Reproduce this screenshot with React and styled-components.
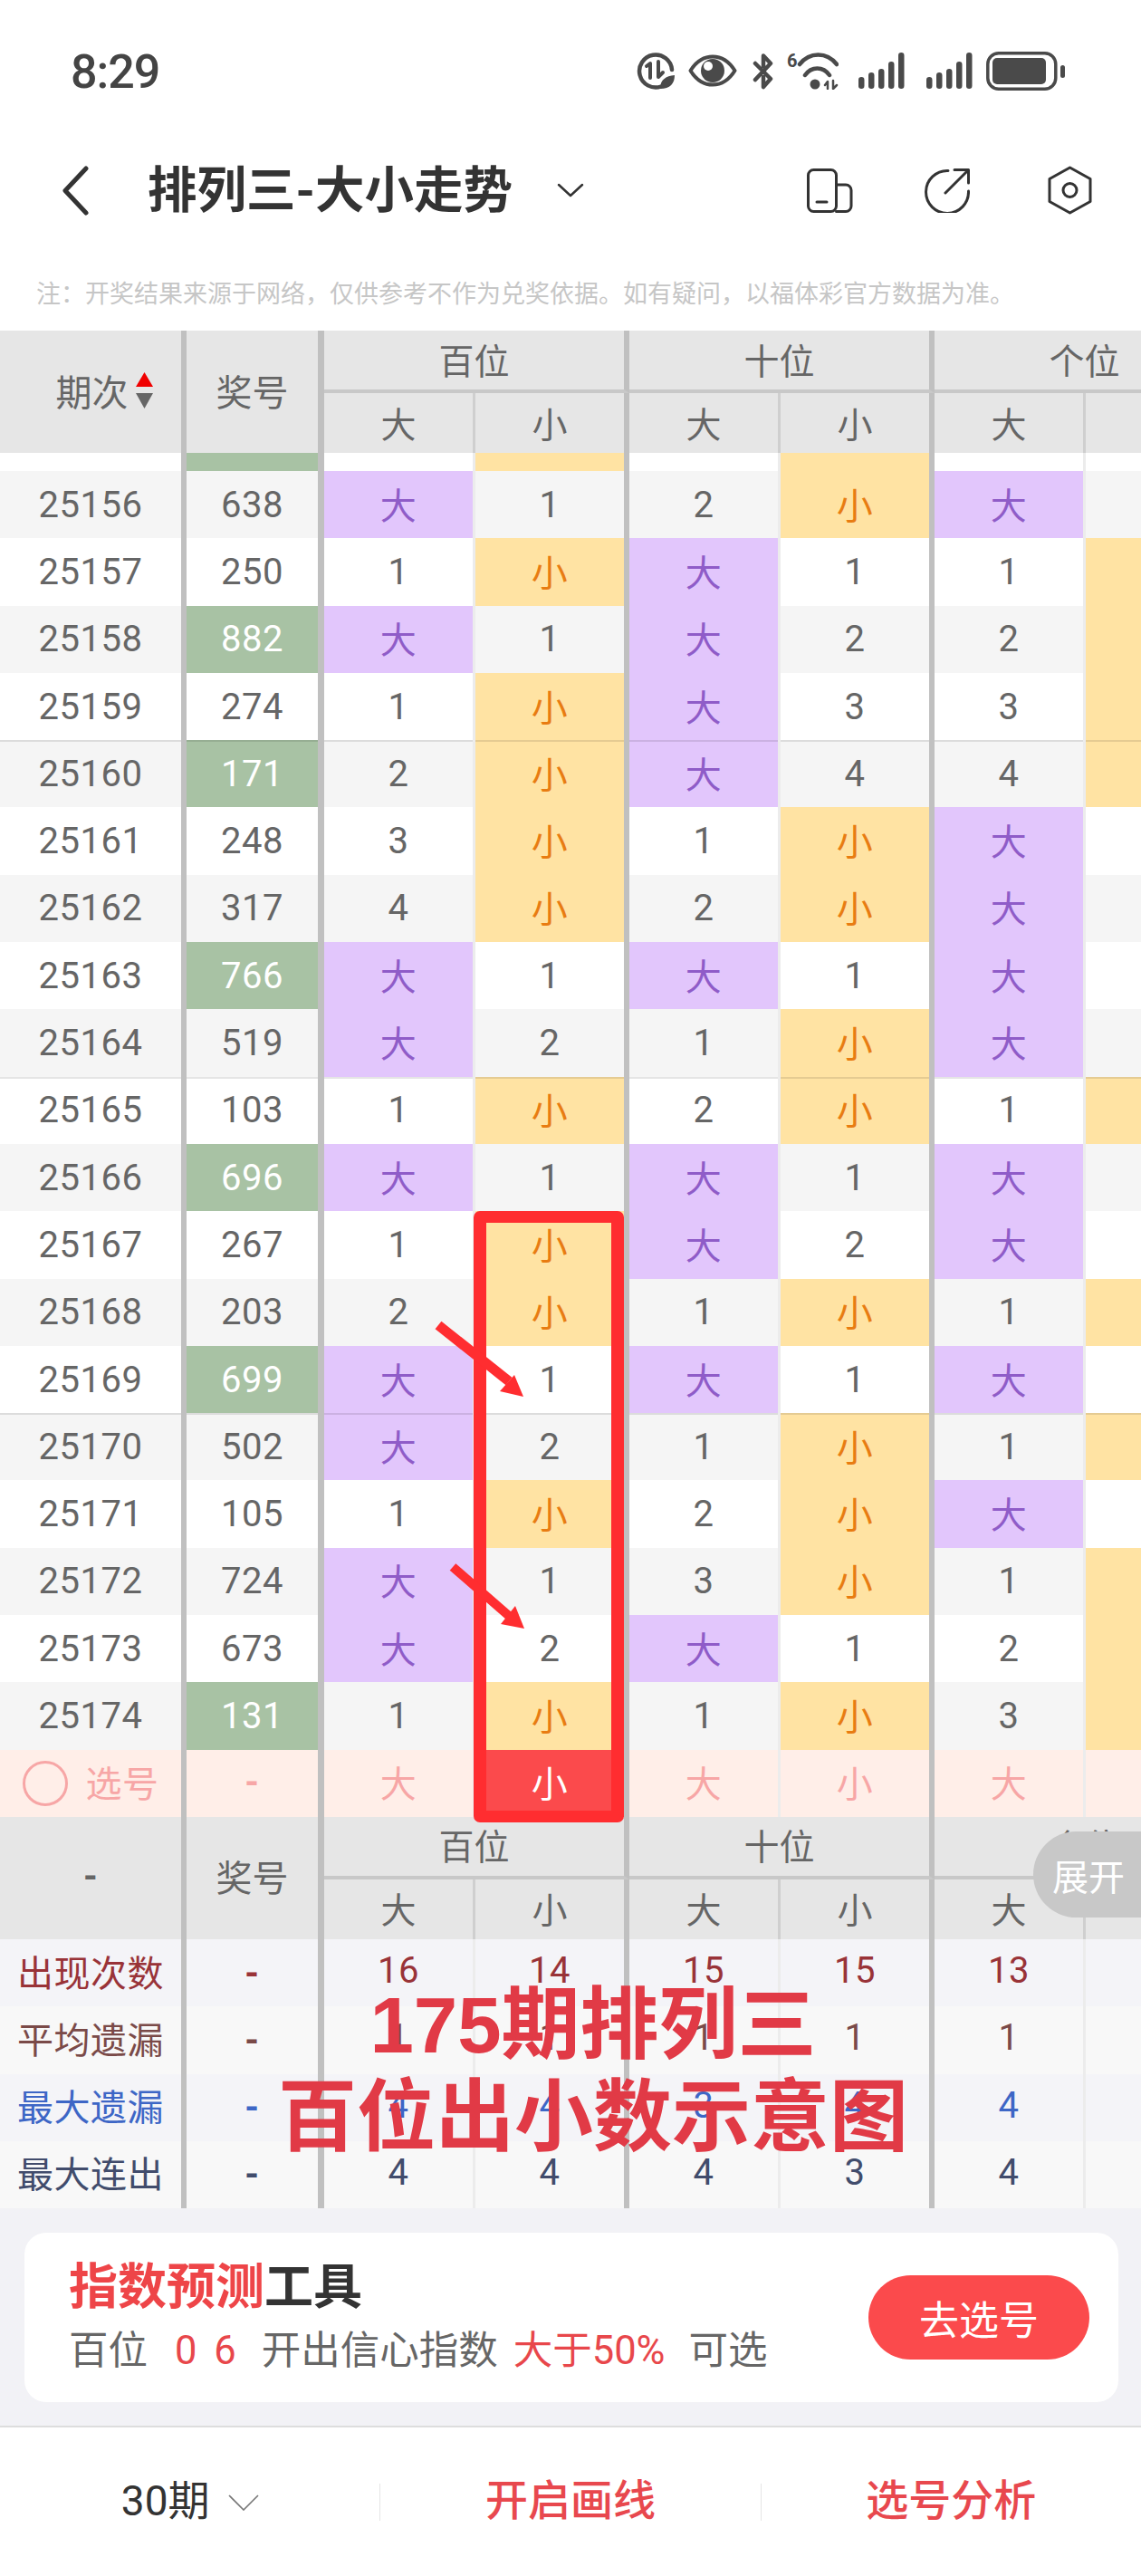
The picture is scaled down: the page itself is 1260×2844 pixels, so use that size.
import React from 'react';
import styled, { createGlobalStyle } from 'styled-components';

const GlobalStyle = createGlobalStyle`
  html, body {
    margin: 0;
    padding: 0;
    background: #fff;
  }
  * {
    box-sizing: border-box;
  }
`;

const Page = styled.div`
  position: relative;
  width: 1260px;
  height: 2844px;
  overflow: hidden;
  background: #fff;
  font-family: Roboto, 'Noto Sans CJK SC', sans-serif;
  color: #666;
`;

/* status bar */
const StatusBar = styled.div`
  display: flex;
  align-items: center;
  height: 156px;
  padding: 0 84px 0 78px;
`;

const Time = styled.div`
  padding-top: 2px;
  font-size: 52px;
  font-weight: 500;
  color: #444;
  letter-spacing: -1px;
`;

const StatusIcons = styled.div`
  display: flex;
  align-items: center;
  margin-left: auto;
`;

const StatusSlot = styled.span`
  display: flex;
  margin-left: ${p => p.$ml || 0}px;
`;

/* nav */
const NavBar = styled.div`
  display: flex;
  align-items: center;
  height: 108px;
  padding: 0 54px 0 68px;
`;

const Title = styled.h1`
  margin: 0 49px 0 65px;
  font-size: 54.5px;
  font-weight: 700;
  line-height: 70px;
  color: #333;
  white-space: nowrap;
`;

const NavIcon = styled.svg`
  display: block;
  margin-left: ${p => p.$ml || 0}px;
  fill: none;
  stroke: #333;
  stroke-width: 3;
  stroke-linecap: round;
  stroke-linejoin: round;
`;

const NavRight = styled.div`
  display: flex;
  align-items: center;
  margin-left: auto;
`;

const Note = styled.div`
  height: 101px;
  padding: 42px 0 0 40px;
  font-size: 27px;
  line-height: 38px;
  color: #c6c6c6;
  white-space: nowrap;
`;

/* table */
const COLUMNS = '206px 152px repeat(3, 167px 170px)';
const ROW_H = 74.3;

const HeadGrid = styled.div`
  display: grid;
  grid-template-columns: ${COLUMNS};
  grid-template-rows: 69px 66px;
  width: 1369px;
  background: #e6e6e6;
`;

const HeadSide = styled.div`
  grid-row: 1 / 3;
  display: flex;
  align-items: center;
  justify-content: center;
  gap: 8px;
  padding: 0 0 4px ${p => p.$indent || 0}px;
  font-size: 40px;
  border-right: ${p => p.$edge}px solid #c0c0c0;
`;

const GroupHead = styled.div`
  grid-column: span 2;
  display: flex;
  align-items: center;
  justify-content: center;
  padding-bottom: 4px;
  font-size: 39px;
  border-bottom: 4px solid #c8c8c8;
  border-right: 6px solid #c0c0c0;
`;

const SubHead = styled.div`
  display: flex;
  align-items: center;
  justify-content: center;
  padding-bottom: 3px;
  font-size: 39px;
  border-right: ${p => (p.$thick ? '6px solid #c0c0c0' : '3px solid #cfcfcf')};
`;

const Row = styled.div`
  display: grid;
  grid-template-columns: ${COLUMNS};
  width: 1369px;
  height: ${p => p.$height || ROW_H}px;
`;

const kinds = {
  plain: 'color: #666;',
  green: 'background: #a8c2a4; color: #fff;',
  big: 'background: #e2c6fc; color: #8f5cc8; padding-bottom: 3px;',
  small: 'background: #ffe3a3; color: #e87c12; padding-bottom: 3px;',
  faint: 'background: #ffeee8; color: #f7a6a6; padding-bottom: 3px;',
  pick: 'background: #fb4a4c; color: #fff; padding-bottom: 3px;',
};

const edges = {
  side: '6px solid #c0c0c0',
  wide: '7px solid #c0c0c0',
  thick: '6px solid #c0c0c0',
  thin: '3px solid #ececec',
};

const Cell = styled.div`
  display: flex;
  align-items: center;
  justify-content: center;
  font-size: 40px;
  letter-spacing: 0.5px;
  white-space: nowrap;
  background: ${p => p.$bg};
  color: ${p => p.$color || '#666'};
  border-right: ${p => edges[p.$edge]};
  box-shadow: ${p => (p.$line ? 'inset 0 2px 0 rgba(0, 0, 0, 0.1)' : 'none')};
  padding-bottom: ${p => (p.$lift ? 5 : 0)}px;
  ${p => kinds[p.$kind]}
`;

const Dash = styled.span`
  font-weight: 700;
`;

const SelectCircle = styled.span`
  width: 50px;
  height: 50px;
  margin: 3px 20px 0 0;
  border: 3px solid #f7a6a6;
  border-radius: 50%;
`;

const ExpandTab = styled.div`
  position: absolute;
  right: 0;
  top: 2022px;
  display: flex;
  align-items: center;
  justify-content: flex-end;
  width: 119px;
  height: 95px;
  padding-right: 18px;
  border-radius: 48px 0 0 48px;
  background: #c8c8c8;
  color: #fff;
  font-size: 40px;
`;

/* card + bottom */
const ToolSection = styled.div`
  height: 242px;
  padding: 27px 25px 0 27px;
  background: #f2f2f6;
  border-bottom: 2px solid #ddd;
`;

const ToolCard = styled.div`
  display: flex;
  align-items: center;
  justify-content: space-between;
  height: 187px;
  padding: 0 32px 0 49px;
  border-radius: 24px;
  background: #fff;
`;

const ToolTitle = styled.div`
  font-size: 54px;
  font-weight: 700;
  line-height: 60px;
  color: #333;
  white-space: nowrap;
  em {
    font-style: normal;
    color: #ee4548;
  }
`;

const ToolText = styled.div`
  display: flex;
  margin-top: 15px;
  font-size: 43.5px;
  line-height: 50px;
  color: #666;
  white-space: nowrap;
`;

const ToolPart = styled.span`
  margin-left: ${p => p.$ml || 0}px;
  color: ${p => (p.$red ? '#e8474b' : '#666')};
  word-spacing: ${p => p.$spread || 0}px;
`;

const PickButton = styled.div`
  display: flex;
  align-items: center;
  justify-content: center;
  width: 244px;
  height: 93px;
  border-radius: 47px;
  background: #fb4a4c;
  color: #fff;
  font-size: 44px;
`;

const BottomBar = styled.div`
  display: flex;
  align-items: center;
  height: 165px;
`;

const BottomItem = styled.div`
  flex: 1;
  display: flex;
  align-items: center;
  justify-content: center;
  gap: 20px;
  padding-bottom: 12px;
  font-size: ${p => (p.$red ? 47 : 46)}px;
  font-weight: ${p => (p.$red ? 500 : 400)};
  color: ${p => (p.$red ? '#e8484e' : '#333')};
`;

const BottomChevron = styled.svg`
  margin-top: 12px;
  fill: none;
  stroke: #777;
  stroke-width: 1.6;
`;

const BottomDivider = styled.span`
  width: 1px;
  height: 41px;
  background: #e5e5e5;
`;

/* hand drawn marks over the screenshot */
const RedFrame = styled.div`
  position: absolute;
  left: 523px;
  top: 1337px;
  width: 166px;
  height: 675px;
  border: 13px solid #ff2d30;
  border-left-width: 14px;
  border-right-width: 14px;
  border-radius: 7px;
`;

const Arrow = styled.svg`
  position: absolute;
  left: ${p => p.$left}px;
  top: ${p => p.$top}px;
`;

const BigCaption = styled.div`
  position: absolute;
  left: 0;
  top: 2185px;
  width: 1310px;
  text-align: center;
  font-family: 'Liberation Sans', 'Noto Sans CJK SC', sans-serif;
  font-size: 87px;
  font-weight: 700;
  line-height: 102px;
  color: #e13a46;
  white-space: nowrap;
`;

const rows = [
  ['25156', '638', 0, '大', '1', '2', '小', '大', '1'],
  ['25157', '250', 0, '1', '小', '大', '1', '1', '小'],
  ['25158', '882', 1, '大', '1', '大', '2', '2', '小'],
  ['25159', '274', 0, '1', '小', '大', '3', '3', '小'],
  ['25160', '171', 1, '2', '小', '大', '4', '4', '小'],
  ['25161', '248', 0, '3', '小', '1', '小', '大', '1'],
  ['25162', '317', 0, '4', '小', '2', '小', '大', '2'],
  ['25163', '766', 1, '大', '1', '大', '1', '大', '3'],
  ['25164', '519', 0, '大', '2', '1', '小', '大', '4'],
  ['25165', '103', 0, '1', '小', '2', '小', '1', '小'],
  ['25166', '696', 1, '大', '1', '大', '1', '大', '1'],
  ['25167', '267', 0, '1', '小', '大', '2', '大', '2'],
  ['25168', '203', 0, '2', '小', '1', '小', '1', '小'],
  ['25169', '699', 1, '大', '1', '大', '1', '大', '1'],
  ['25170', '502', 0, '大', '2', '1', '小', '1', '小'],
  ['25171', '105', 0, '1', '小', '2', '小', '大', '1'],
  ['25172', '724', 0, '大', '1', '3', '小', '1', '小'],
  ['25173', '673', 0, '大', '2', '大', '1', '2', '小'],
  ['25174', '131', 1, '1', '小', '1', '小', '3', '小'],
];

const stats = [
  { label: '出现次数', color: '#993338', bg: '#f4f4f8', values: ['16', '14', '15', '15', '13', '17'] },
  { label: '平均遗漏', color: '#7a4a48', bg: '#f8f8f8', values: ['1', '1', '1', '1', '1', '1'] },
  { label: '最大遗漏', color: '#3d66c6', bg: '#f4f4f8', values: ['4', '4', '3', '4', '4', '4'] },
  { label: '最大连出', color: '#414c6c', bg: '#f8f8f8', values: ['4', '4', '4', '3', '4', '4'] },
];

const cellEdge = i => (i % 2 === 0 ? 'thin' : 'thick');

const cellKind = v => {
  if (v === '大') return 'big';
  if (v === '小') return 'small';
  return 'plain';
};

const TableHead = ({ first, indent }) => (
  <HeadGrid>
    <HeadSide $edge={6} $indent={indent}>{first}</HeadSide>
    <HeadSide $edge={7}>奖号</HeadSide>
    {['百位', '十位', '个位'].map(name => (
      <GroupHead key={name}>{name}</GroupHead>
    ))}
    {[0, 1, 2, 3, 4, 5].map(i => (
      <SubHead key={i} $thick={i % 2 === 1}>
        {i % 2 === 0 ? '大' : '小'}
      </SubHead>
    ))}
  </HeadGrid>
);

const StatusStroke = { fill: 'none', stroke: '#4a4a4a', strokeLinecap: 'round', strokeLinejoin: 'round' };

const SaverIcon = () => (
  <svg width="42" height="41" viewBox="0 0 42 41">
    <path d="M27 37.5 A18 18 0 1 1 39 19" strokeWidth="4.5" {...StatusStroke} />
    <path d="M11 15 L15 12 V28 M24 10 V27 L29 22" strokeWidth="4" {...StatusStroke} />
    <path d="M26 40 C26 30 32 26 42 25 C42 34 37 40 26 40 Z" fill="#4a4a4a" />
  </svg>
);

const EyeIcon = () => (
  <svg width="54" height="36" viewBox="0 0 54 36">
    <path d="M2.5 18 C10 6 19 2.5 27 2.5 C35 2.5 44 6 51.5 18 C44 30 35 33.5 27 33.5 C19 33.5 10 30 2.5 18 Z" strokeWidth="4" {...StatusStroke} />
    <circle cx="27" cy="18" r="13" fill="#4a4a4a" />
    <circle cx="22" cy="13" r="5" fill="#fff" />
  </svg>
);

const BluetoothIcon = () => (
  <svg width="25" height="41" viewBox="0 0 25 41">
    <path d="M4 12 L21 29 L13 38 V27 M13 15 V3.5 L21 12 L4 30" strokeWidth="4.5" {...StatusStroke} />
  </svg>
);

const WifiIcon = () => (
  <svg width="57" height="42" viewBox="0 0 57 42">
    <text x="0" y="17" fontFamily="Roboto, sans-serif" fontWeight="700" fontSize="20" fill="#4a4a4a">6</text>
    <path d="M14 14 C25 0 44 0 55 14 M20 26 C27 16 40 16 47 26" strokeWidth="4.5" {...StatusStroke} />
    <circle cx="31" cy="36" r="5.5" fill="#4a4a4a" />
    <path d="M42 37 L45 33 V41 M51 32 V41 L55 37" strokeWidth="2.5" {...StatusStroke} />
  </svg>
);

const SignalIcon = () => (
  <svg width="52" height="40" viewBox="0 0 52 40">
    {[13, 18, 22, 30, 40].map((h, i) => (
      <rect key={i} x={1 + i * 11} y={40 - h} width="6.5" height={h} rx="3.2" fill="#4a4a4a" />
    ))}
  </svg>
);

const BatteryIcon = () => (
  <svg width="87" height="43" viewBox="0 0 87 43">
    <rect x="1.8" y="1.8" width="75" height="39.4" rx="12" fill="none" stroke="#4a4a4a" strokeWidth="3.5" />
    <rect x="7" y="7" width="59" height="29" rx="5" fill="#4a4a4a" />
    <rect x="82" y="15" width="5" height="14" rx="2.5" fill="#4a4a4a" />
  </svg>
);

const App = () => (
  <Page>
    <GlobalStyle />

    <StatusBar>
      <Time>8:29</Time>
      <StatusIcons>
        <StatusSlot><SaverIcon /></StatusSlot>
        <StatusSlot $ml={15}><EyeIcon /></StatusSlot>
        <StatusSlot $ml={16}><BluetoothIcon /></StatusSlot>
        <StatusSlot $ml={14}><WifiIcon /></StatusSlot>
        <StatusSlot $ml={21}><SignalIcon /></StatusSlot>
        <StatusSlot $ml={23}><SignalIcon /></StatusSlot>
        <StatusSlot $ml={15}><BatteryIcon /></StatusSlot>
      </StatusIcons>
    </StatusBar>

    <NavBar>
      <NavIcon width="30" height="55" viewBox="0 0 30 55" style={{ strokeWidth: 5 }}>
        <polyline points="27,3 4,27.5 27,52" />
      </NavIcon>
      <Title>排列三-大小走势</Title>
      <NavIcon width="30" height="16" viewBox="0 0 30 16" style={{ strokeWidth: 2.5 }}>
        <polyline points="2,2 15,14 28,2" />
      </NavIcon>
      <NavRight>
        <NavIcon width="51" height="49" viewBox="0 0 51 49">
          <rect x="1.5" y="1.5" width="31" height="46" rx="6" />
          <path d="M32.5 18 H43 A6 6 0 0 1 49 24 V41.5 A6 6 0 0 1 43 47.5 H32.5" />
          <line x1="11" y1="37" x2="22" y2="37" />
        </NavIcon>
        <NavIcon $ml={78} width="51" height="50" viewBox="0 0 51 50">
          <path d="M27 3.5 A23.5 23.5 0 1 0 49.5 26" />
          <path d="M24 28 L49 3 M34 2.5 H49.5 V17" />
        </NavIcon>
        <NavIcon $ml={86} width="49" height="54" viewBox="0 0 49 54">
          <polygon points="24.5,2 47,14.5 47,39.5 24.5,52 2,39.5 2,14.5" />
          <circle cx="24.5" cy="27" r="7.5" />
        </NavIcon>
      </NavRight>
    </NavBar>

    <Note>注：开奖结果来源于网络，仅供参考不作为兑奖依据。如有疑问，以福体彩官方数据为准。</Note>

    <TableHead
      indent={30}
      first={
        <>
          期次
          <svg width="19" height="40" viewBox="0 0 19 40">
            <polygon points="9.5,0 19,16 0,16" fill="#f00000" />
            <polygon points="0,23 19,23 9.5,40" fill="#666" />
          </svg>
        </>
      }
    />

    {/* row scrolled mostly out of view under the sticky head */}
    <Row $height={20}>
      <Cell $edge="side" $bg="#fff" />
      <Cell $edge="wide" $kind="green" />
      <Cell $edge="thin" $bg="#fff" />
      <Cell $edge="thick" $kind="small" />
      <Cell $edge="thin" $bg="#fff" />
      <Cell $edge="thick" $kind="small" />
      <Cell $edge="thin" $bg="#fff" />
      <Cell $edge="thick" $bg="#fff" />
    </Row>

    {rows.map((row, r) => {
      const [issue, prize, isPair, ...cells] = row;
      const bg = r % 2 === 0 ? '#f5f5f5' : '#fff';
      const line = r % 5 === 4;
      return (
        <Row key={issue}>
          <Cell $edge="side" $bg={bg} $line={line}>{issue}</Cell>
          <Cell $edge="wide" $bg={bg} $line={line} $kind={isPair ? 'green' : 'plain'}>{prize}</Cell>
          {cells.map((v, i) => (
            <Cell key={i} $edge={cellEdge(i)} $bg={bg} $line={line} $kind={cellKind(v)}>{v}</Cell>
          ))}
        </Row>
      );
    })}

    <Row>
      <Cell $edge="side" $kind="faint"><SelectCircle />选号</Cell>
      <Cell $edge="wide" $kind="faint"><Dash>-</Dash></Cell>
      {['大', '小', '大', '小', '大', '小'].map((v, i) => (
        <Cell key={i} $edge={cellEdge(i)} $kind={i === 1 ? 'pick' : 'faint'}>{v}</Cell>
      ))}
    </Row>

    <TableHead first={<Dash>-</Dash>} />

    {stats.map(stat => (
      <Row key={stat.label}>
        <Cell $edge="side" $bg={stat.bg} $color={stat.color} $lift>{stat.label}</Cell>
        <Cell $edge="wide" $bg={stat.bg} $color={stat.color}><Dash>-</Dash></Cell>
        {stat.values.map((v, i) => (
          <Cell key={i} $edge={cellEdge(i)} $bg={stat.bg} $color={stat.color} $lift>{v}</Cell>
        ))}
      </Row>
    ))}

    <ToolSection>
      <ToolCard>
        <div>
          <ToolTitle><em>指数预测</em>工具</ToolTitle>
          <ToolText>
            <ToolPart>百位</ToolPart>
            <ToolPart $ml={30} $red $spread={8}>0 6</ToolPart>
            <ToolPart $ml={28}>开出信心指数</ToolPart>
            <ToolPart $ml={17} $red>大于50%</ToolPart>
            <ToolPart $ml={26}>可选</ToolPart>
          </ToolText>
        </div>
        <PickButton>去选号</PickButton>
      </ToolCard>
    </ToolSection>

    <BottomBar>
      <BottomItem>
        30期
        <BottomChevron width="34" height="18" viewBox="0 0 34 18">
          <polyline points="1,1 17,17 33,1" />
        </BottomChevron>
      </BottomItem>
      <BottomDivider />
      <BottomItem $red>开启画线</BottomItem>
      <BottomDivider />
      <BottomItem $red>选号分析</BottomItem>
    </BottomBar>

    <ExpandTab>展开</ExpandTab>
    <RedFrame />
    <Arrow $left={478} $top={1455} width="105" height="92" viewBox="0 0 105 92">
      <line x1="6" y1="8" x2="84" y2="70" stroke="#ff2d30" strokeWidth="11" />
      <polygon points="100,87 74,81 90,63" fill="#ff2d30" />
    </Arrow>
    <Arrow $left={494} $top={1724} width="90" height="80" viewBox="0 0 90 80">
      <line x1="6" y1="6" x2="68" y2="60" stroke="#ff2d30" strokeWidth="10" />
      <polygon points="85,74 59,69 75,49" fill="#ff2d30" />
    </Arrow>
    <BigCaption>
      175期排列三
      <br />
      百位出小数示意图
    </BigCaption>
  </Page>
);

export default App;
